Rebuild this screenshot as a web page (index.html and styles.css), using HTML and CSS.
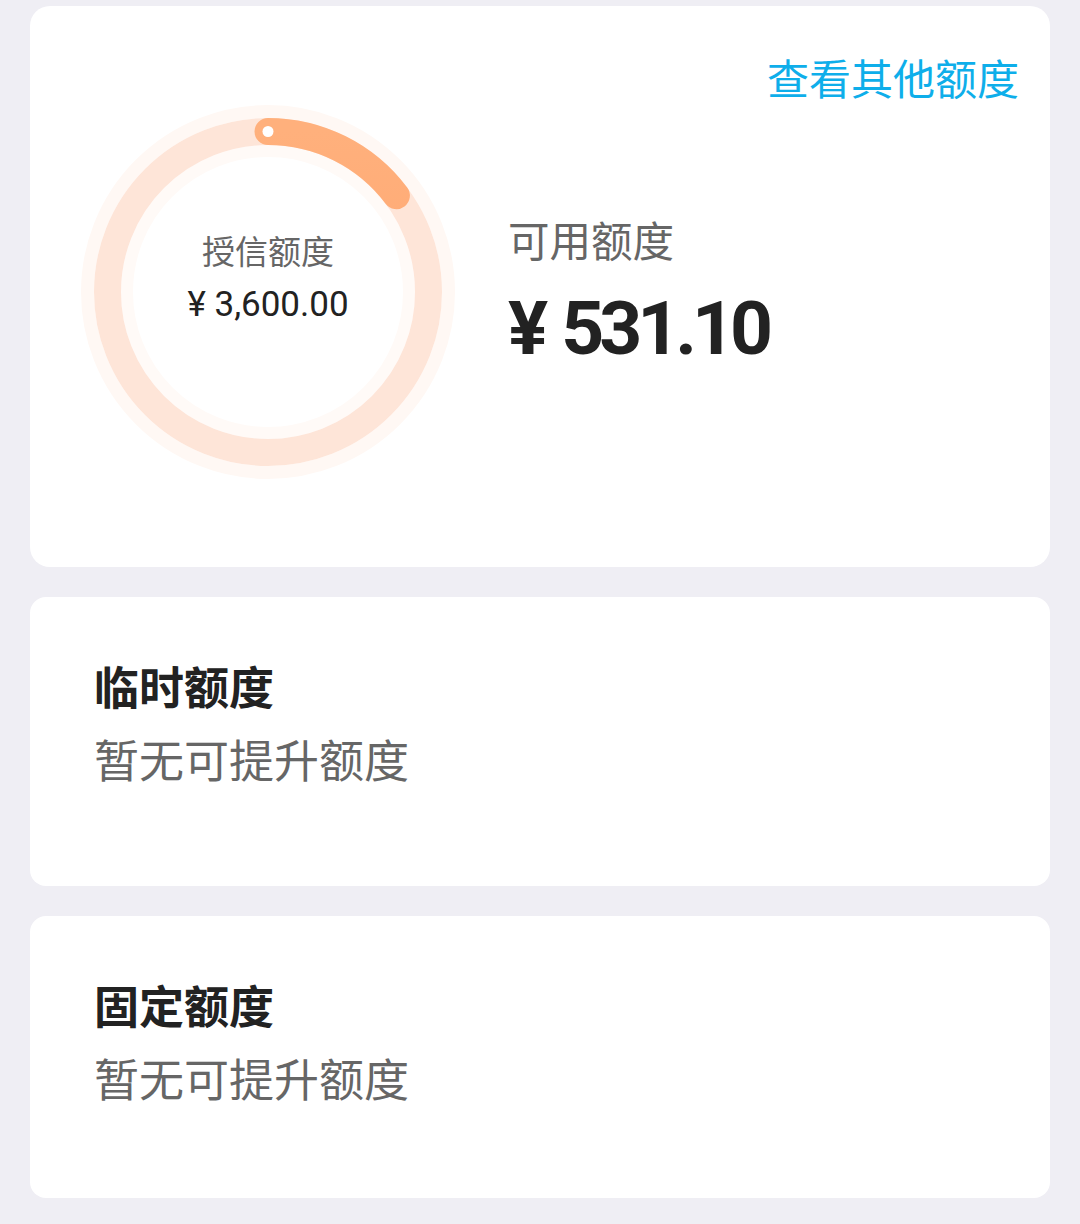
FILE: index.html
```html
<!DOCTYPE html>
<html lang="zh-CN">
<head>
<meta charset="utf-8">
<link rel="stylesheet" href="styles.css">
</head>
<body>
<div class="page">
  <section class="card card-main">
    <div class="card-head"><a class="link">查看其他额度</a></div>
    <div class="main-body">
      <div class="ring">
        <svg width="380" height="380" viewBox="0 0 380 380">
          <circle cx="190" cy="190" r="180.5" fill="none" stroke="#fff8f4" stroke-width="13"/>
          <circle cx="190" cy="190" r="141" fill="none" stroke="#fffaf7" stroke-width="12"/>
          <circle cx="190" cy="190" r="160.5" fill="none" stroke="#fee5d8" stroke-width="27"/>
          <defs>
            <linearGradient id="arcg" x1="0" y1="0" x2="1" y2="0">
              <stop offset="0" stop-color="#ffa36d"/>
              <stop offset="1" stop-color="#ffb07c"/>
            </linearGradient>
          </defs>
          <circle cx="190" cy="190" r="160.5" fill="none" stroke="url(#arcg)" stroke-width="27" stroke-linecap="round" stroke-dasharray="148.75 2000" transform="rotate(-90 190 190)"/>
          <circle cx="190" cy="29.5" r="5.5" fill="#ffffff"/>
        </svg>
        <div class="ring-text">
          <div class="ring-label">授信额度</div>
          <div class="ring-amount">¥ 3,600.00</div>
        </div>
      </div>
      <div class="avail">
        <div class="avail-label">可用额度</div>
        <div class="avail-amount"><span class="cur">¥</span>531.10</div>
      </div>
    </div>
  </section>
  <section class="card card-quota card-temp">
    <div class="quota-title">临时额度</div>
    <div class="quota-desc">暂无可提升额度</div>
  </section>
  <section class="card card-quota card-fixed">
    <div class="quota-title">固定额度</div>
    <div class="quota-desc">暂无可提升额度</div>
  </section>
</div>
</body>
</html>
```
FILE: styles.css
```css
html, body {
  margin: 0;
  padding: 0;
  background: #efeef4;
}
body {
  font-family: Roboto, "Noto Sans CJK SC", sans-serif;
  width: 1080px;
  height: 1224px;
  overflow: hidden;
}
.page {
  display: flex;
  flex-direction: column;
  gap: 30px;
  padding: 6px 30px 0 30px;
}
.card {
  background: #ffffff;
  border-radius: 20px;
}
.card-main {
  height: 561px;
  box-sizing: border-box;
  padding: 46px 31px 0 48px;
}
.card-head {
  display: flex;
  justify-content: flex-end;
}
.link {
  font-size: 42px;
  line-height: 50px;
  color: #0eaeea;
  font-family: "Noto Sans CJK SC", sans-serif;
}
.main-body {
  display: flex;
  align-items: flex-start;
}
.ring {
  position: relative;
  width: 380px;
  height: 380px;
  flex: none;
}
.ring svg {
  display: block;
}
.ring-text {
  position: absolute;
  left: 0;
  top: 0;
  width: 380px;
  padding-top: 126px;
  display: flex;
  flex-direction: column;
  align-items: center;
}
.ring-label {
  font-size: 33px;
  line-height: 44px;
  color: #666666;
  font-family: "Noto Sans CJK SC", sans-serif;
}
.ring-amount {
  font-size: 35px;
  line-height: 44px;
  margin-top: 11px;
  color: #222222;
}
.avail {
  margin-left: 50px;
  padding-top: 112px;
  display: flex;
  flex-direction: column;
}
.avail-label {
  font-size: 41.5px;
  line-height: 50px;
  color: #666666;
  font-family: "Noto Sans CJK SC", sans-serif;
}
.avail-amount {
  font-size: 75px;
  line-height: 76px;
  margin-top: 26px;
  font-weight: 700;
  letter-spacing: -5px;
  color: #222222;
}
.cur {
  margin-right: 18px;
}
.card-quota {
  border-radius: 16px;
  box-sizing: border-box;
  padding: 56px 64px 0 64px;
  font-family: "Noto Sans CJK SC", sans-serif;
}
.card-temp {
  height: 289px;
}
.card-fixed {
  height: 282px;
}
.quota-title {
  font-size: 45px;
  line-height: 66px;
  font-weight: 700;
  color: #222222;
}
.quota-desc {
  font-size: 45px;
  line-height: 66px;
  margin-top: 7px;
  color: #666666;
}
```
